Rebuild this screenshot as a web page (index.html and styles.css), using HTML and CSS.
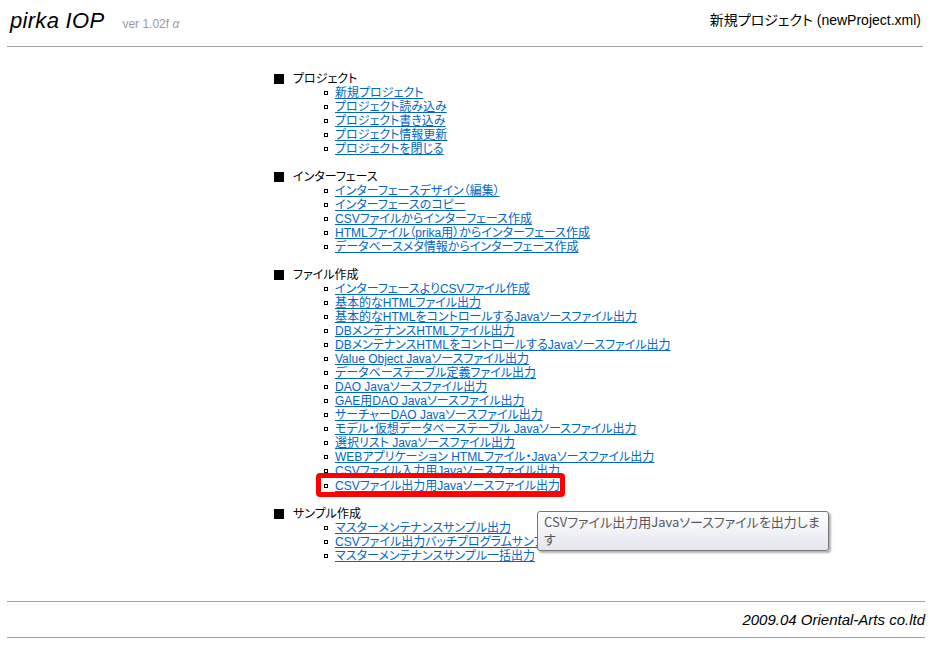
FILE: index.html
```html
<!DOCTYPE html>
<html lang="ja">
<head>
  <meta charset="UTF-8" />
  <title>pirka IOP</title>
  <link rel="stylesheet" href="styles.css">
</head>
<body>
  <div class="header">
    <div class="brand">
      <span class="logo">pirka IOP</span>
      <span class="version">ver 1.02f <i>&alpha;</i></span>
    </div>
    <div class="project">新規プロジェクト (newProject.xml)</div>
  </div>

  <div class="menu">
    <ul class="sections">
      <li class="section"><span class="section-title">プロジェクト</span>
        <ul class="items">
          <li><a href="#">新規プロジェクト</a></li>
          <li><a href="#">プロジェクト読み込み</a></li>
          <li><a href="#">プロジェクト書き込み</a></li>
          <li><a href="#">プロジェクト情報更新</a></li>
          <li><a href="#">プロジェクトを閉じる</a></li>
        </ul>
      </li>
      <li class="section"><span class="section-title">インターフェース</span>
        <ul class="items">
          <li><a href="#">インターフェースデザイン（編集）</a></li>
          <li><a href="#">インターフェースのコピー</a></li>
          <li><a href="#">CSVファイルからインターフェース作成</a></li>
          <li><a href="#">HTMLファイル（prika用）からインターフェース作成</a></li>
          <li><a href="#">データベースメタ情報からインターフェース作成</a></li>
        </ul>
      </li>
      <li class="section"><span class="section-title">ファイル作成</span>
        <ul class="items">
          <li><a href="#">インターフェースよりCSVファイル作成</a></li>
          <li><a href="#">基本的なHTMLファイル出力</a></li>
          <li><a href="#">基本的なHTMLをコントロールするJavaソースファイル出力</a></li>
          <li><a href="#">DBメンテナンスHTMLファイル出力</a></li>
          <li><a href="#">DBメンテナンスHTMLをコントロールするJavaソースファイル出力</a></li>
          <li><a href="#">Value Object Javaソースファイル出力</a></li>
          <li><a href="#">データベーステーブル定義ファイル出力</a></li>
          <li><a href="#">DAO Javaソースファイル出力</a></li>
          <li><a href="#">GAE用DAO Javaソースファイル出力</a></li>
          <li><a href="#">サーチャーDAO Javaソースファイル出力</a></li>
          <li><a href="#">モデル・仮想データベーステーブル Javaソースファイル出力</a></li>
          <li><a href="#">選択リスト Javaソースファイル出力</a></li>
          <li><a href="#">WEBアプリケーション HTMLファイル・Javaソースファイル出力</a></li>
          <li><a href="#">CSVファイル入力用Javaソースファイル出力</a></li>
          <li class="marked"><a href="#">CSVファイル出力用Javaソースファイル出力</a><div class="tooltip">CSVファイル出力用Javaソースファイルを出力します</div></li>
        </ul>
      </li>
      <li class="section"><span class="section-title">サンプル作成</span>
        <ul class="items">
          <li><a href="#">マスターメンテナンスサンプル出力</a></li>
          <li><a href="#">CSVファイル出力バッチプログラムサンプル出力</a></li>
          <li><a href="#">マスターメンテナンスサンプル一括出力</a></li>
        </ul>
      </li>
    </ul>
  </div>

  <div class="footer">2009.04 Oriental-Arts co.ltd</div>
</body>
</html>
```

FILE: styles.css
```css
body {
  margin: 0;
  padding: 0 7px;
  background-color: #ffffff;
  font-family: "Liberation Sans", "Noto Sans CJK JP", sans-serif;
  font-size: 12px;
  color: #000000;
}
.header {
  display: flex;
  justify-content: space-between;
  align-items: flex-start;
  height: 46px;
  border-bottom: 1px solid #a0a0a0;
}
.brand {
  display: flex;
  align-items: baseline;
  padding: 8px 0 0 3px;
}
.logo {
  font-style: italic;
  font-size: 22px;
  letter-spacing: 0.3px;
}
.version {
  margin-left: 18px;
  font-size: 12px;
  color: #9a9a9a;
}
.project {
  padding: 9px 2px 0 0;
  font-size: 14px;
  font-feature-settings: "palt";
}
.menu {
  padding: 25px 0 0 267px;
  height: 529px;
  font-feature-settings: "palt";
}
.sections,
.items {
  list-style: none;
  margin: 0;
  padding: 0;
}
.section {
  line-height: 14px;
  margin-bottom: 14px;
}
.section::before {
  content: "";
  display: inline-block;
  width: 10px;
  height: 10px;
  background-color: #000000;
  margin-right: 9px;
  vertical-align: -1px;
}
.items {
  margin-left: 50px;
}
.items li {
  position: relative;
  width: fit-content;
  white-space: nowrap;
}
.items li::before {
  content: "";
  display: inline-block;
  width: 2px;
  height: 2px;
  border: 1px solid #000000;
  margin-right: 7px;
  vertical-align: 2px;
}
.items a {
  color: #0066cc;
}
.marked {
  margin-top: 1px;
}
.marked::after {
  content: "";
  position: absolute;
  top: -6px;
  bottom: -4px;
  left: -8px;
  right: -5px;
  border: 5px solid #ff0000;
  border-radius: 4px;
}
.tooltip {
  position: absolute;
  top: 32px;
  left: 213px;
  z-index: 5;
  box-sizing: border-box;
  width: 292px;
  height: 40px;
  padding: 1px 6px;
  white-space: normal;
  font-family: "Noto Sans CJK JP", sans-serif;
  font-size: 13px;
  line-height: 17px;
  color: #575757;
  background: linear-gradient(#ffffff, #e4e5f0);
  border: 1px solid #767676;
  border-radius: 3px;
  box-shadow: 2px 2px 2px rgba(0, 0, 0, 0.3);
}
.footer {
  border-top: 1px solid #a0a0a0;
  border-bottom: 1px solid #a0a0a0;
  height: 35px;
  line-height: 35px;
  text-align: right;
  font-style: italic;
  font-size: 15px;
  margin-right: -2px;
}
```
